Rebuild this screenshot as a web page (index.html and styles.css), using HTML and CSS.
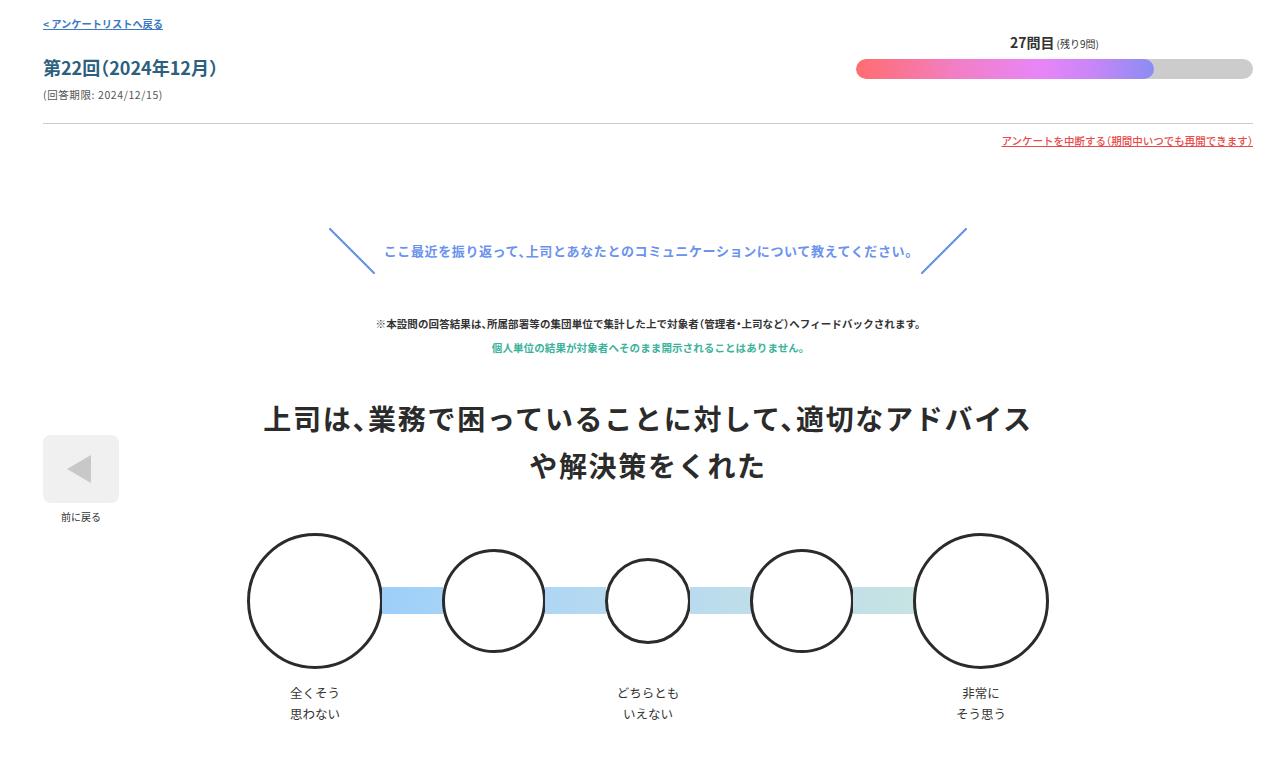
FILE: index.html
```html
<!DOCTYPE html>
<html lang="ja">
<head>
<meta charset="utf-8">
<title>アンケート</title>
<link rel="stylesheet" href="styles.css">
</head>
<body>
<div class="page">
  <header class="header">
    <div class="header-left">
      <a class="back-link" href="#">&lt; アンケートリストへ戻る</a>
      <h1 class="title">第22回（2024年12月）</h1>
      <p class="deadline">(回答期限: 2024/12/15)</p>
    </div>
    <div class="progress">
      <div class="progress-label"><span class="progress-num">27問目</span><span class="progress-rest">(残り9問)</span></div>
      <div class="progress-track"><div class="progress-fill" style="width:75%"></div></div>
    </div>
  </header>
  <div class="divider"></div>
  <div class="suspend-row"><a class="suspend-link" href="#">アンケートを中断する（期間中いつでも再開できます）</a></div>

  <div class="intro">
    <svg class="slash" width="46" height="46" viewBox="0 0 46 46"><line x1="1" y1="1" x2="45" y2="45" stroke="#6a92ee" stroke-width="2.2" stroke-linecap="round"/></svg>
    <p class="intro-text">ここ最近を振り返って、上司とあなたとのコミュニケーションについて教えてください。</p>
    <svg class="slash" width="46" height="46" viewBox="0 0 46 46"><line x1="45" y1="1" x2="1" y2="45" stroke="#6a92ee" stroke-width="2.2" stroke-linecap="round"/></svg>
  </div>

  <div class="notes">
    <p class="note">※本設問の回答結果は、所属部署等の集団単位で集計した上で対象者（管理者・上司など）へフィードバックされます。</p>
    <p class="note note-green">個人単位の結果が対象者へそのまま開示されることはありません。</p>
  </div>

  <section class="question">
    <div class="prev">
      <button class="prev-btn" type="button" aria-label="前に戻る"><span class="prev-tri"></span></button>
      <span class="prev-label">前に戻る</span>
    </div>
    <h2 class="question-text">上司は、業務で困っていることに対して、適切なアドバイスや解決策をくれた</h2>
    <div class="scale">
      <div class="opt">
        <div class="opt-wrap"><span class="circle c-xl"></span></div>
        <span class="opt-label">全くそう<br>思わない</span>
      </div>
      <span class="bar bar1"></span>
      <div class="opt">
        <div class="opt-wrap"><span class="circle c-md"></span></div>
        <span class="opt-label"></span>
      </div>
      <span class="bar bar2"></span>
      <div class="opt">
        <div class="opt-wrap"><span class="circle c-sm"></span></div>
        <span class="opt-label">どちらとも<br>いえない</span>
      </div>
      <span class="bar bar3"></span>
      <div class="opt">
        <div class="opt-wrap"><span class="circle c-md"></span></div>
        <span class="opt-label"></span>
      </div>
      <span class="bar bar4"></span>
      <div class="opt">
        <div class="opt-wrap"><span class="circle c-xl"></span></div>
        <span class="opt-label">非常に<br>そう思う</span>
      </div>
    </div>
  </section>
</div>
</body>
</html>
```

FILE: styles.css
```css
* { box-sizing: border-box; }

body {
  margin: 0;
  background: #ffffff;
  color: #333333;
  font-family: "Noto Sans CJK JP", "Noto Sans", sans-serif;
  font-feature-settings: "halt";
}

p, h1, h2 { margin: 0; }

.page {
  padding: 16px 24px 0 43px;
}

/* header */
.header {
  display: flex;
  justify-content: space-between;
  align-items: flex-start;
}

.header-left {
  display: flex;
  flex-direction: column;
  align-items: flex-start;
}

.back-link {
  font-size: 10.2px;
  line-height: 16px;
  font-weight: 700;
  color: #3b78c6;
  text-decoration: underline;
}

.title {
  margin-top: 22px;
  font-size: 18px;
  line-height: 26px;
  font-weight: 700;
  color: #2d5f7e;
}

.deadline {
  margin-top: 8px;
  font-size: 10.5px;
  letter-spacing: 0.6px;
  line-height: 14px;
  color: #555555;
}

.progress {
  width: 397px;
  margin-top: 15px;
  display: flex;
  flex-direction: column;
  align-items: center;
}

.progress-label {
  line-height: 20px;
  color: #333333;
}

.progress-num {
  font-size: 14px;
  font-weight: 700;
}

.progress-rest {
  font-size: 10px;
  margin-left: 2px;
}

.progress-track {
  margin-top: 5px;
  width: 100%;
  height: 20px;
  border-radius: 10px;
  background: #cccccc;
  overflow: hidden;
}

.progress-fill {
  height: 100%;
  border-radius: 10px;
  background: linear-gradient(90deg, #ff6d6f 0%, #f17fc8 35%, #e885f8 62%, #c686f6 80%, #8a8df3 100%);
}

.divider {
  margin-top: 21px;
  border-top: 1px solid #cccccc;
}

.suspend-row {
  margin-top: 9px;
  display: flex;
  justify-content: flex-end;
}

.suspend-link {
  font-size: 10.5px;
  line-height: 16px;
  color: #e94a4a;
  font-weight: 500;
  text-decoration: underline;
}

/* intro */
.intro {
  margin-top: 79px;
  display: flex;
  justify-content: center;
  align-items: center;
  gap: 9px;
}

.slash { display: block; }

.intro-text {
  font-size: 13px;
  letter-spacing: 0.62px;
  line-height: 20px;
  font-weight: 700;
  color: #6a92ee;
}

.notes {
  margin-top: 38px;
  text-align: center;
}

.note {
  font-size: 10.5px;
  letter-spacing: 0.1px;
  line-height: 24px;
  font-weight: 700;
  color: #333333;
}

.note-green {
  color: #3bb29b;
}

/* question */
.question {
  margin-top: 35px;
  display: grid;
  grid-template-columns: 76px 1fr 76px;
}

.prev {
  grid-column: 1;
  grid-row: 1 / span 2;
  margin-top: 40px;
  display: flex;
  flex-direction: column;
  align-items: center;
}

.prev-btn {
  width: 76px;
  height: 68px;
  border: none;
  border-radius: 8px;
  background: #f0f0f0;
  padding: 0;
  display: flex;
  justify-content: center;
  align-items: center;
}

.prev-tri {
  width: 0;
  height: 0;
  border-top: 14px solid transparent;
  border-bottom: 14px solid transparent;
  border-right: 24px solid #c8c8c8;
  margin-right: 4px;
}

.prev-label {
  margin-top: 6px;
  font-size: 10px;
  line-height: 16px;
  color: #333333;
}

.question-text {
  grid-column: 2;
  grid-row: 1;
  justify-self: center;
  max-width: 790px;
  text-align: center;
  font-size: 28px;
  letter-spacing: 1.7px;
  line-height: 47px;
  font-weight: 700;
  color: #2b2b2b;
}

.scale {
  grid-column: 2;
  grid-row: 2;
  margin-top: 44px;
  display: flex;
  justify-content: center;
  align-items: flex-start;
}

.opt {
  display: flex;
  flex-direction: column;
  align-items: center;
}

.opt-wrap {
  height: 136px;
  display: flex;
  align-items: center;
}

.circle {
  display: block;
  border: 3px solid #2b2b2b;
  border-radius: 50%;
  background: #ffffff;
}

.c-xl { width: 136px; height: 136px; }
.c-md { width: 104px; height: 104px; }
.c-sm { width: 86px; height: 86px; }

.opt-label {
  margin-top: 13px;
  font-size: 12.5px;
  line-height: 21px;
  text-align: center;
  white-space: nowrap;
  color: #333333;
}

.bar {
  display: block;
  width: 61px;
  height: 27px;
  margin-top: 54px;
  margin-left: -1px;
  margin-right: -1px;
}

.bar1 { background: linear-gradient(90deg, #9ccffa, #a6d3f6); }
.bar2 { background: linear-gradient(90deg, #aed6f4, #b6d9f0); }
.bar3 { background: linear-gradient(90deg, #b9dbee, #bfdeea); }
.bar4 { background: linear-gradient(90deg, #c2e0e7, #c7e3e2); }
```
